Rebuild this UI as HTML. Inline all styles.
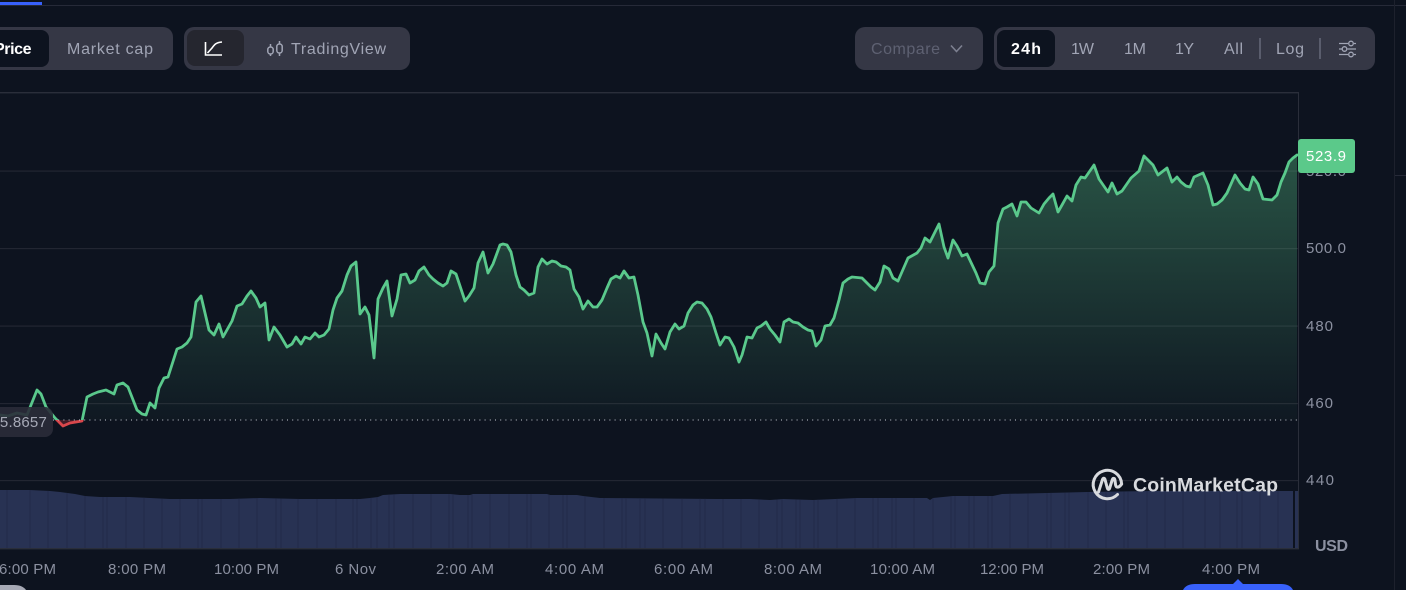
<!DOCTYPE html>
<html>
<head>
<meta charset="utf-8">
<style>
html,body{margin:0;padding:0;background:#0d131f;width:1406px;height:590px;overflow:hidden}
svg{display:block}
text{font-family:"Liberation Sans",sans-serif}
</style>
</head>
<body>
<svg width="1406" height="590" viewBox="0 0 1406 590" xmlns="http://www.w3.org/2000/svg">
<defs>
<linearGradient id="g" gradientUnits="userSpaceOnUse" x1="0" y1="150" x2="0" y2="420">
<stop offset="0" stop-color="#5bc98a" stop-opacity=".36"/>
<stop offset="1" stop-color="#5bc98a" stop-opacity=".03"/>
</linearGradient>
<clipPath id="above"><rect x="0" y="0" width="1298" height="420"/></clipPath>
<clipPath id="below"><rect x="0" y="420" width="1298" height="30"/></clipPath>
<clipPath id="vol"><polygon id="volp" points="0,490 30,490 50,491 60,492 75,494 85,496 100,497 130,497 170,499 230,499 260,498 300,499 360,499 370,498 378,497 383,495 400,494 450,494 460,495 470,495 473,494 547,494 550,495 577,495 583,496 600,498 717,499 750,499 770,500 783,499 813,500 857,498 927,498 930,500 933,498 953,496 993,496 1002,494 1047,493 1087,492 1150,491 1293,491 1293,548 0,548"/></clipPath>
</defs>
<rect width="1406" height="590" fill="#0d131f"/>

<!-- top -->
<rect x="0" y="5" width="1406" height="1" fill="#262a38"/>
<rect x="0" y="2" width="42" height="3" fill="#3861fb"/>
<rect x="1394" y="0" width="1" height="590" fill="#1d212d"/>
<rect x="1395" y="175" width="11" height="1" fill="#262a38"/>

<!-- toolbar left -->
<rect x="-20" y="27" width="193" height="43" rx="10" fill="#353745"/>
<rect x="-20" y="30" width="69" height="37" rx="8" fill="#0d131f"/>
<text x="-6" y="54" font-size="16" font-weight="700" fill="#fff" textLength="37.5" lengthAdjust="spacing">Price</text>
<text x="67" y="54" font-size="16" fill="#a1a5b5" textLength="86" lengthAdjust="spacing">Market cap</text>

<rect x="184" y="27" width="226" height="43" rx="10" fill="#353745"/>
<rect x="187" y="30" width="57" height="36" rx="8" fill="#25262f"/>
<path d="M205.5 42V55H222M207.5 53L212 48C214.5 44.5 216 42.5 222 42" fill="none" stroke="#fff" stroke-width="1.6"/>
<g fill="none" stroke="#a1a5b5" stroke-width="1.5">
<path d="M270.5 44V56M279.5 41V56"/>
<rect x="267.8" y="47" width="5.4" height="7" rx="2.5" fill="#353745"/>
<rect x="276.8" y="44" width="5.4" height="9" rx="2.5" fill="#353745"/>
</g>
<text x="291" y="54" font-size="16" fill="#a1a5b5" textLength="95" lengthAdjust="spacing">TradingView</text>

<!-- toolbar right -->
<rect x="855" y="27" width="128" height="43" rx="10" fill="#353745"/>
<text x="871" y="54" font-size="16" fill="#5e6172" textLength="69" lengthAdjust="spacing">Compare</text>
<path d="M951 45.5L956.5 51.5L962 45.5" fill="none" stroke="#7d8090" stroke-width="1.6"/>

<rect x="994" y="27" width="381" height="43" rx="10" fill="#353745"/>
<rect x="997" y="30" width="58" height="37" rx="8" fill="#0d131f"/>
<text x="1011" y="54" font-size="16" font-weight="700" fill="#fff" textLength="30" lengthAdjust="spacing">24h</text>
<g font-size="16" fill="#a1a5b5">
<text x="1071" y="54" textLength="23" lengthAdjust="spacing">1W</text>
<text x="1124" y="54" textLength="22" lengthAdjust="spacing">1M</text>
<text x="1175" y="54" textLength="19" lengthAdjust="spacing">1Y</text>
<text x="1224" y="54" textLength="19" lengthAdjust="spacing">All</text>
<text x="1276" y="54" textLength="28" lengthAdjust="spacing">Log</text>
</g>
<rect x="1259" y="38" width="2" height="21" fill="#5a5d6d"/>
<rect x="1319" y="38" width="2" height="21" fill="#5a5d6d"/>
<g fill="none" stroke="#a1a5b5" stroke-width="1.3">
<path d="M1339 43.5H1348M1354 43.5H1356M1339 49H1342M1347.5 49H1356M1339 54.5H1348M1354 54.5H1356"/>
<circle cx="1351" cy="43.5" r="2.3"/>
<circle cx="1344.5" cy="49" r="2.3"/>
<circle cx="1351" cy="54.5" r="2.3"/>
</g>

<!-- grid -->
<rect x="0" y="92" width="1299" height="1.4" fill="#2a2e3a"/>
<g fill="#222632">
<rect x="0" y="170.5" width="1298" height="1.2"/>
<rect x="0" y="248" width="1298" height="1.2"/>
<rect x="0" y="325.5" width="1298" height="1.2"/>
<rect x="0" y="403" width="1298" height="1.2"/>
<rect x="0" y="480" width="1298" height="1.2"/>
</g>
<rect x="1298" y="92" width="1" height="457" fill="#2a2e3a"/>
<rect x="0" y="548" width="1299" height="1.4" fill="#2a2e3a"/>

<!-- volume -->
<polygon points="0,490 30,490 50,491 60,492 75,494 85,496 100,497 130,497 170,499 230,499 260,498 300,499 360,499 370,498 378,497 383,495 400,494 450,494 460,495 470,495 473,494 547,494 550,495 577,495 583,496 600,498 717,499 750,499 770,500 783,499 813,500 857,498 927,498 930,500 933,498 953,496 993,496 1002,494 1047,493 1087,492 1150,491 1293,491 1293,548 0,548" fill="#283253"/>
<rect x="1295" y="491" width="3" height="57" fill="#283253"/>
<path clip-path="url(#vol)" stroke="#222a48" stroke-width="1" fill="none" d="M7 485V550M30 485V550M48 485V550M67 485V550M85 485V550M103 485V550M107 485V550M126 485V550M144 485V550M162 485V550M180 485V550M198 485V550M202 485V550M221 485V550M239 485V550M257 485V550M276 485V550M281 485V550M298 485V550M317 485V550M336 485V550M353 485V550M357 485V550M371 485V550M377 485V550M389 485V550M394 485V550M413 485V550M431 485V550M449 485V550M453 485V550M468 485V550M472 485V550M490 485V550M509 485V550M527 485V550M531 485V550M549 485V550M563 485V550M567 485V550M585 485V550M604 485V550M622 485V550M626 485V550M640 485V550M645 485V550M663 485V550M682 485V550M700 485V550M705 485V550M723 485V550M741 485V550M759 485V550M777 485V550M782 485V550M796 485V550M800 485V550M814 485V550M818 485V550M837 485V550M855 485V550M873 485V550M878 485V550M892 485V550M896 485V550M914 485V550M933 485V550M951 485V550M955 485V550M969 485V550M974 485V550M988 485V550M992 485V550M1010 485V550M1028 485V550M1047 485V550M1051 485V550M1065 485V550M1069 485V550M1088 485V550M1106 485V550M1124 485V550M1128 485V550M1147 485V550M1165 485V550M1183 485V550M1205 485V550M1220 485V550M1237 485V550M1242 485V550M1260 485V550M1278 485V550"/>

<!-- area -->
<polygon clip-path="url(#above)" fill="url(#g)" points="0,420 0,415 8,416 17,413 27,415 37,390 41,394 46,407 55,418 63,426 70,423 82,421 87,397 93,394 98,392 106,390 114,394 117,385 123,383 128,387 137,410 142,414 146,415 150,403 155,408 159,388 164,378 168,377 177,349 182,347 187,343 191,337 196,302 201,296 209,330 214,335 219,324 223,337 232,321 237,306 242,304 247,296 251,291 256,298 260,307 265,303 269,340 274,327 280,335 287,347 292,344 296,337 301,344 305,337 310,339 315,333 319,337 324,335 329,329 333,310 337,298 342,291 347,275 351,266 356,262 360,314 365,307 369,315 374,358 378,299 383,288 387,281 392,316 397,299 401,275 406,274 410,283 415,280 419,271 424,267 429,275 433,279 438,283 443,286 447,283 451,271 456,274 465,301 469,296 474,288 478,263 483,252 488,273 493,264 500,245 503,244 507,245 511,252 516,275 520,287 524,290 529,295 534,293 538,267 542,259 547,264 552,261 556,262 561,266 566,267 570,270 574,289 579,297 583,309 588,301 593,307 597,307 602,300 607,288 611,279 616,276 620,278 624,271 629,278 634,277 638,295 643,322 647,333 652,356 656,334 661,343 665,349 670,332 675,324 679,329 684,326 688,313 693,305 697,302 702,303 707,309 711,317 716,333 720,345 725,337 729,338 734,347 739,362 742,355 747,337 752,338 757,328 761,326 766,322 770,329 775,335 780,342 784,322 789,319 793,322 798,323 803,327 808,330 812,331 816,346 821,340 825,326 830,325 834,318 839,300 843,283 848,279 852,277 862,278 871,287 875,290 880,282 884,266 889,269 893,278 898,281 908,258 917,253 921,248 925,238 930,242 939,224 944,247 948,258 953,240 957,246 962,256 967,254 976,273 980,283 985,284 989,272 994,266 998,223 1003,209 1007,207 1012,204 1017,216 1021,202 1026,202 1031,208 1039,213 1044,204 1049,198 1053,194 1058,212 1062,205 1067,196 1072,201 1076,185 1081,177 1085,178 1094,165 1099,179 1108,192 1112,183 1117,194 1122,191 1131,178 1139,171 1144,156 1149,161 1153,165 1158,175 1167,168 1172,182 1177,177 1181,182 1186,186 1190,187 1194,177 1203,173 1208,185 1213,205 1217,204 1222,200 1227,193 1235,175 1240,183 1245,189 1249,190 1253,177 1258,184 1263,199 1272,200 1277,195 1281,182 1285,173 1289,162 1293,158 1297,155 1297,420"/>
<polygon clip-path="url(#below)" fill="#ea3943" fill-opacity=".25" points="55,420 63,426 70,423 82,421 84,420"/>

<!-- line -->
<g fill="none" stroke-width="2.8" stroke-linejoin="round" stroke-linecap="round">
<polyline id="ln" clip-path="url(#above)" stroke="#5ac98c" points="0,415 8,416 17,413 27,415 37,390 41,394 46,407 55,418 63,426 70,423 82,421 87,397 93,394 98,392 106,390 114,394 117,385 123,383 128,387 137,410 142,414 146,415 150,403 155,408 159,388 164,378 168,377 177,349 182,347 187,343 191,337 196,302 201,296 209,330 214,335 219,324 223,337 232,321 237,306 242,304 247,296 251,291 256,298 260,307 265,303 269,340 274,327 280,335 287,347 292,344 296,337 301,344 305,337 310,339 315,333 319,337 324,335 329,329 333,310 337,298 342,291 347,275 351,266 356,262 360,314 365,307 369,315 374,358 378,299 383,288 387,281 392,316 397,299 401,275 406,274 410,283 415,280 419,271 424,267 429,275 433,279 438,283 443,286 447,283 451,271 456,274 465,301 469,296 474,288 478,263 483,252 488,273 493,264 500,245 503,244 507,245 511,252 516,275 520,287 524,290 529,295 534,293 538,267 542,259 547,264 552,261 556,262 561,266 566,267 570,270 574,289 579,297 583,309 588,301 593,307 597,307 602,300 607,288 611,279 616,276 620,278 624,271 629,278 634,277 638,295 643,322 647,333 652,356 656,334 661,343 665,349 670,332 675,324 679,329 684,326 688,313 693,305 697,302 702,303 707,309 711,317 716,333 720,345 725,337 729,338 734,347 739,362 742,355 747,337 752,338 757,328 761,326 766,322 770,329 775,335 780,342 784,322 789,319 793,322 798,323 803,327 808,330 812,331 816,346 821,340 825,326 830,325 834,318 839,300 843,283 848,279 852,277 862,278 871,287 875,290 880,282 884,266 889,269 893,278 898,281 908,258 917,253 921,248 925,238 930,242 939,224 944,247 948,258 953,240 957,246 962,256 967,254 976,273 980,283 985,284 989,272 994,266 998,223 1003,209 1007,207 1012,204 1017,216 1021,202 1026,202 1031,208 1039,213 1044,204 1049,198 1053,194 1058,212 1062,205 1067,196 1072,201 1076,185 1081,177 1085,178 1094,165 1099,179 1108,192 1112,183 1117,194 1122,191 1131,178 1139,171 1144,156 1149,161 1153,165 1158,175 1167,168 1172,182 1177,177 1181,182 1186,186 1190,187 1194,177 1203,173 1208,185 1213,205 1217,204 1222,200 1227,193 1235,175 1240,183 1245,189 1249,190 1253,177 1258,184 1263,199 1272,200 1277,195 1281,182 1285,173 1289,162 1293,158 1297,155"/>
<polyline clip-path="url(#below)" stroke="#d9474c" stroke-width="2.8" points="55,418 63,426 70,423 82,421 87,397"/>
</g>

<!-- baseline -->
<line x1="53" y1="420" x2="1298" y2="420" stroke="#c9ccd4" stroke-width="1" stroke-dasharray="1 4.2"/>
<rect x="-20" y="407" width="73" height="30" rx="8" fill="#2a2c38" fill-opacity=".9"/>
<text x="47" y="427" font-size="15" text-anchor="end" fill="#a6a9b6" letter-spacing=".2">455.8657</text>

<!-- y axis -->
<g font-size="15" fill="#8b90a0">
<text x="1306" y="176" textLength="40" lengthAdjust="spacing">520.0</text>
<text x="1306" y="253" textLength="40" lengthAdjust="spacing">500.0</text>
<text x="1306" y="331" textLength="27" lengthAdjust="spacing">480</text>
<text x="1306" y="408" textLength="27" lengthAdjust="spacing">460</text>
<text x="1306" y="485" textLength="28" lengthAdjust="spacing">440</text>
</g>
<rect x="1298" y="139" width="57" height="34" rx="3" fill="#5bc98a"/>
<text x="1306" y="161" font-size="15" fill="#fff" textLength="40" lengthAdjust="spacing">523.9</text>
<text x="1315" y="551" font-size="16" font-weight="700" fill="#8b90a0" textLength="33" lengthAdjust="spacing">USD</text>

<!-- x axis -->
<g font-size="15" fill="#8b90a0">
<text x="-1" y="574" textLength="57" lengthAdjust="spacing">6:00 PM</text>
<text x="108" y="574" textLength="58" lengthAdjust="spacing">8:00 PM</text>
<text x="214" y="574" textLength="65" lengthAdjust="spacing">10:00 PM</text>
<text x="335" y="574" textLength="41" lengthAdjust="spacing">6 Nov</text>
<text x="436" y="574" textLength="58" lengthAdjust="spacing">2:00 AM</text>
<text x="545" y="574" textLength="59" lengthAdjust="spacing">4:00 AM</text>
<text x="654" y="574" textLength="59" lengthAdjust="spacing">6:00 AM</text>
<text x="764" y="574" textLength="58" lengthAdjust="spacing">8:00 AM</text>
<text x="870" y="574" textLength="65" lengthAdjust="spacing">10:00 AM</text>
<text x="980" y="574" textLength="64" lengthAdjust="spacing">12:00 PM</text>
<text x="1093" y="574" textLength="57" lengthAdjust="spacing">2:00 PM</text>
<text x="1202" y="574" textLength="58" lengthAdjust="spacing">4:00 PM</text>
</g>

<!-- logo -->
<g fill="none" stroke="#d8dade" stroke-width="3" stroke-linecap="round" stroke-linejoin="round">
<path d="M1117.5 494.5A14.2 14.2 0 1 1 1121.6 484"/>
<path d="M1098.5 492L1102.5 479.5C1103.2 477.6 1104.6 478 1105 479.5L1107.3 488C1107.9 490 1109.2 489.6 1109.7 488L1112.2 480C1112.9 477.7 1114.6 478 1114.9 480L1115.6 485C1116.2 488 1119 488 1121.6 484"/>
</g>
<text x="1133" y="491.5" font-size="19.5" font-weight="700" fill="#d8dade" textLength="145" lengthAdjust="spacing">CoinMarketCap</text>

<!-- bottom elements -->
<path d="M1183 590C1185 586 1189 584 1195 584H1233L1238 579L1243 584H1281C1287 584 1291 586 1293 590Z" fill="#3861fb"/>
<path d="M0 590V585H14C20 585 24 587 26 590Z" fill="#a6a9b5"/>
</svg>
</body>
</html>
